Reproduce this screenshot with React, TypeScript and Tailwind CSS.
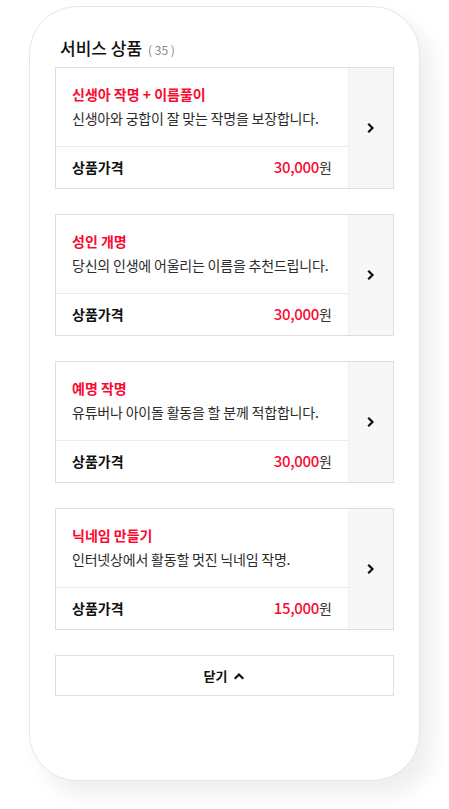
import React from 'react';

type Product = {
    title: string;
    desc: string;
    price: string;
};

const PRODUCTS: Product[] = [
    { title: '신생아 작명 + 이름풀이', desc: '신생아와 궁합이 잘 맞는 작명을 보장합니다.', price: '30,000' },
    { title: '성인 개명', desc: '당신의 인생에 어울리는 이름을 추천드립니다.', price: '30,000' },
    { title: '예명 작명', desc: '유튜버나 아이돌 활동을 할 분께 적합합니다.', price: '30,000' },
    { title: '닉네임 만들기', desc: '인터넷상에서 활동할 멋진 닉네임 작명.', price: '15,000' },
];

const Chevron: React.FC<{ dir: 'right' | 'up'; className?: string }> = ({ dir, className }) => (
    <svg
        width="12"
        height="12"
        viewBox="0 0 12 12"
        fill="none"
        stroke="currentColor"
        strokeWidth="2.2"
        strokeLinecap="square"
        strokeLinejoin="miter"
        className={className}
    >
        {dir === 'right' ? <polyline points="4 2.5 7.5 6 4 9.5" /> : <polyline points="2.5 8 6 4.5 9.5 8" />}
    </svg>
);

const ProductCard: React.FC<{ item: Product }> = ({ item }) => (
    <div className="flex h-[122px] border border-[#dedede] bg-white">
        <div className="flex min-w-0 flex-1 flex-col">
            <div className="flex-1 px-4 pt-[15px]">
                <p className="text-[14px] font-bold leading-[22px] text-[#fa0a32]">{item.title}</p>
                <p className="mt-[3px] whitespace-nowrap text-[14px] leading-[20px] tracking-[-0.2px] text-[#2b2b2b]">{item.desc}</p>
            </div>
            <div className="flex h-[42px] items-center justify-between border-t border-[#ececec] px-4 pb-[1px]">
                <span className="text-[14px] font-bold text-[#111]">상품가격</span>
                <span className="text-[14px] text-[#333]">
                    <span className="text-[15px] font-medium tracking-[-0.3px] text-[#fa0a32]">{item.price}</span>원
                </span>
            </div>
        </div>
        <div className="flex w-[45px] items-center justify-center border-l border-[#eeeeee] bg-[#f7f7f7] text-[#111]">
            <Chevron dir="right" />
        </div>
    </div>
);

export default function App() {
    return (
        <div className="min-h-[809px] bg-white pt-[6px] pl-[29px] font-['Noto_Sans_CJK_KR','Noto_Sans',sans-serif]">
            <div className="h-[775px] w-[391px] rounded-[48px] border border-[#e6e6e6] bg-white px-[25px] pt-[29px] shadow-[12px_14px_22px_rgba(0,0,0,0.07)]">
                <div className="flex items-baseline gap-[6px] pl-[5px]">
                    <h2 className="text-[17px] font-medium leading-[24px] text-[#111]">서비스 상품</h2>
                    <span className="text-[12px] text-[#888]">( 35 )</span>
                </div>
                <div className="mt-[7px] flex flex-col gap-[25px]">
                    {PRODUCTS.map(p => (
                        <ProductCard key={p.title} item={p} />
                    ))}
                    <button className="flex h-[41px] items-center justify-center gap-[6px] border border-[#dedede] bg-white text-[13px] font-bold text-[#111]">
                        닫기
                        <Chevron dir="up" />
                    </button>
                </div>
            </div>
        </div>
    );
}
